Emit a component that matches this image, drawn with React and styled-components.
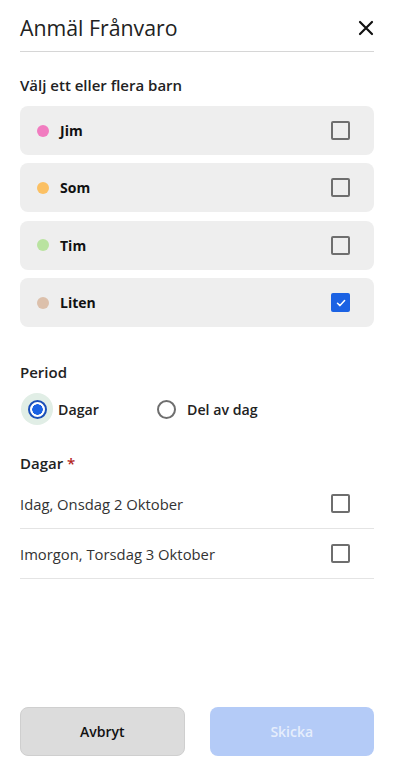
import styled, { createGlobalStyle } from "styled-components";
import { useState } from "react";

const GlobalStyle = createGlobalStyle`
body {
  margin: 0;
  background: #ffffff;
  font-family: "Open Sans", "Noto Sans", sans-serif;
  color: #222;
}
* { box-sizing: border-box; }
`;

const children = [
  { name: "Jim", color: "#f17cc0" },
  { name: "Som", color: "#fbc063" },
  { name: "Tim", color: "#b9e3a0" },
  { name: "Liten", color: "#dcc0ab" },
];

const days = ["Idag, Onsdag 2 Oktober", "Imorgon, Torsdag 3 Oktober"];

const CheckBox = ({ checked }) => (
  <Box $checked={checked}>
    {checked && (
      <svg width="12" height="12" viewBox="0 0 12 12">
        <path d="M2.5 6.2 L5 8.6 L9.6 3.6" fill="none" stroke="#fff" strokeWidth="1.5" strokeLinecap="round" strokeLinejoin="round" />
      </svg>
    )}
  </Box>
);

const App = () => {
  const [picked, setPicked] = useState(["Liten"]);
  const [period, setPeriod] = useState("dagar");

  const toggle = (name) =>
    setPicked((p) => (p.includes(name) ? p.filter((n) => n !== name) : [...p, name]));

  return (
    <>
      <GlobalStyle />
      <Page>
        <Header>
          <Title>Anmäl Frånvaro</Title>
          <Close aria-label="Stäng">
            <svg width="16" height="16" viewBox="0 0 16 16">
              <path d="M2 2 L14 14 M14 2 L2 14" stroke="#111" strokeWidth="2.2" strokeLinecap="round" />
            </svg>
          </Close>
        </Header>

        <Label $top={23}>Välj ett eller flera barn</Label>
        <CardList>
          {children.map((c) => (
            <Card key={c.name} onClick={() => toggle(c.name)}>
              <Dot $color={c.color} />
              <Name>{c.name}</Name>
              <CheckBox checked={picked.includes(c.name)} />
            </Card>
          ))}
        </CardList>

        <Label $top={35}>Period</Label>
        <RadioRow>
          <RadioOption onClick={() => setPeriod("dagar")}>
            <Radio $on={period === "dagar"} />
            Dagar
          </RadioOption>
          <RadioOption onClick={() => setPeriod("del")}>
            <Radio $on={period === "del"} />
            Del av dag
          </RadioOption>
        </RadioRow>

        <Label $top={28}>
          Dagar <Star>*</Star>
        </Label>
        <DayList>
          {days.map((d) => (
            <DayRow key={d}>
              {d}
              <CheckBox checked={false} />
            </DayRow>
          ))}
        </DayList>

        <Footer>
          <CancelButton>Avbryt</CancelButton>
          <SendButton disabled>Skicka</SendButton>
        </Footer>
      </Page>
    </>
  );
};

const Page = styled.div`
display: flex;
flex-direction: column;
height: 771px;
padding: 0 19px 15px 20px;
`;

const Header = styled.div`
display: flex;
align-items: center;
justify-content: space-between;
padding: 14px 0 9px;
border-bottom: 1px solid #d6d6d6;
`;

const Title = styled.h1`
margin: 0;
font-size: 21.3px;
line-height: 28px;
font-weight: 400;
color: #222;
`;

const Close = styled.button`
display: flex;
align-items: center;
justify-content: center;
width: 28px;
height: 28px;
margin-right: -6px;
padding: 0;
border: none;
background: none;
cursor: pointer;
`;

const Label = styled.div`
margin-top: ${(p) => p.$top}px;
font-size: 15px;
line-height: 20px;
font-weight: 600;
color: #222;
`;

const Star = styled.span`
color: #b3261e;
`;

const CardList = styled.div`
display: flex;
flex-direction: column;
gap: 8.4px;
margin-top: 11px;
`;

const Card = styled.div`
display: flex;
align-items: center;
height: 49px;
padding: 0 24px 0 17px;
border-radius: 8px;
background: #eeeeee;
cursor: pointer;
`;

const Dot = styled.span`
width: 12px;
height: 12px;
border-radius: 50%;
background: ${(p) => p.$color};
`;

const Name = styled.span`
flex: 1;
margin-left: 11px;
font-size: 14px;
font-weight: 700;
color: #111;
`;

const Box = styled.span`
display: flex;
align-items: center;
justify-content: center;
width: 19px;
height: 19px;
border-radius: 2px;
border: ${(p) => (p.$checked ? "none" : "2px solid #6e6e6e")};
background: ${(p) => (p.$checked ? "#1b62e3" : "transparent")};
`;

const RadioRow = styled.div`
display: flex;
align-items: center;
margin-top: 11px;
margin-left: 1px;
height: 32px;
`;

const RadioOption = styled.label`
display: flex;
align-items: center;
gap: 5px;
width: 129px;
font-size: 14.2px;
font-weight: 600;
color: #222;
cursor: pointer;
`;

const Radio = styled.span`
position: relative;
display: flex;
align-items: center;
justify-content: center;
width: 32px;
height: 32px;
border-radius: 50%;
background: ${(p) => (p.$on ? "#e1eee6" : "transparent")};
&::before {
  content: "";
  width: 19px;
  height: 19px;
  border-radius: 50%;
  box-sizing: border-box;
  border: 2px solid ${(p) => (p.$on ? "#1b4fb8" : "#6e6e6e")};
  background: ${(p) => (p.$on ? "radial-gradient(circle, #1b62e3 0 5px, #fff 5.5px)" : "#fff")};
}
`;

const DayList = styled.div`
display: flex;
flex-direction: column;
margin-top: 6px;
`;

const DayRow = styled.div`
display: flex;
align-items: center;
justify-content: space-between;
height: 50px;
padding-right: 24px;
border-bottom: 1px solid #e4e4e4;
font-size: 14.8px;
color: #333;
`;

const Footer = styled.div`
display: grid;
grid-template-columns: 1fr 1fr;
gap: 25px;
margin-top: auto;
`;

const CancelButton = styled.button`
height: 49px;
border-radius: 8px;
border: 1px solid #cfcfcf;
background: #dcdcdc;
font-family: inherit;
font-size: 14px;
font-weight: 600;
color: #111;
cursor: pointer;
`;

const SendButton = styled.button`
height: 49px;
border-radius: 8px;
border: none;
background: #b4cbf7;
font-family: inherit;
font-size: 14px;
font-weight: 600;
color: #e6eefc;
`;

export default App;
